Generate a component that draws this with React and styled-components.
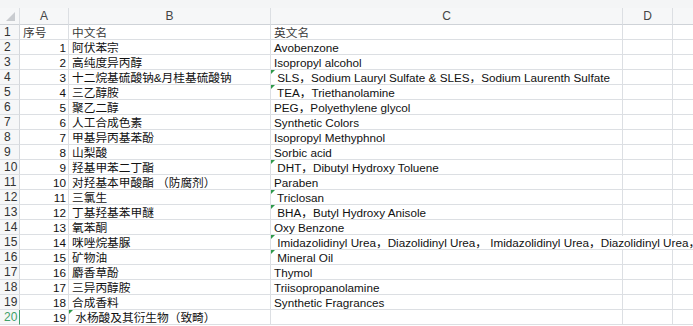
import React from "react";
import styled, { createGlobalStyle } from "styled-components";

const rows = [
  { a: "序号", b: "中文名", c: "英文名", head: true },
  { a: "1", b: "阿伏苯宗", c: "Avobenzone" },
  { a: "2", b: "高纯度异丙醇", c: "Isopropyl alcohol" },
  { a: "3", b: "十二烷基硫酸钠&月桂基硫酸钠", c: " SLS，Sodium Lauryl Sulfate & SLES，Sodium Laurenth Sulfate", cm: true },
  { a: "4", b: "三乙醇胺", c: " TEA，Triethanolamine", cm: true },
  { a: "5", b: "聚乙二醇", c: "PEG，Polyethylene glycol" },
  { a: "6", b: "人工合成色素", c: "Synthetic Colors" },
  { a: "7", b: "甲基异丙基苯酚", c: "Isopropyl Methyphnol" },
  { a: "8", b: "山梨酸", c: "Sorbic acid" },
  { a: "9", b: "羟基甲苯二丁酯", c: " DHT，Dibutyl Hydroxy Toluene", cm: true },
  { a: "10", b: "对羟基本甲酸酯 （防腐剂）", c: "Paraben" },
  { a: "11", b: "三氯生", c: " Triclosan", cm: true },
  { a: "12", b: "丁基羟基苯甲醚", c: " BHA，Butyl Hydroxy Anisole", cm: true },
  { a: "13", b: "氧苯酮", c: "Oxy Benzone" },
  { a: "14", b: "咪唑烷基脲", c: " Imidazolidinyl Urea，Diazolidinyl Urea， Imidazolidinyl Urea，Diazolidinyl Urea，", cm: true, spill: true },
  { a: "15", b: "矿物油", c: " Mineral Oil", cm: true },
  { a: "16", b: "麝香草酚", c: "Thymol" },
  { a: "17", b: "三异丙醇胺", c: "Triisopropanolamine" },
  { a: "18", b: "合成香料", c: "Synthetic Fragrances" },
  { a: "19", b: " 水杨酸及其衍生物（致畸）", c: "", bm: true },
];

const GlobalStyle = createGlobalStyle`
  body {
    margin: 0;
    background: #ffffff;
    font-family: "Liberation Sans", "Noto Sans CJK SC", sans-serif;
  }
`;

const Page = styled.div`
  width: 693px;
  height: 326px;
  overflow: hidden;
  background: #fff;
`;

const TopStrip = styled.div`
  height: 8px;
  background: #f4f5f6;
`;

const Grid = styled.div`
  display: grid;
  grid-template-columns: 20px 49px 202px 352px 50px 40px;
  grid-template-rows: 17px;
  grid-auto-rows: 15px;
`;

const ColHead = styled.div`
  background: #f6f7f8;
  border-right: 1px solid #dcdfe3;
  border-bottom: 1px solid #cfd3d8;
  color: #454545;
  font-size: 12px;
  display: flex;
  align-items: center;
  justify-content: center;
  position: relative;
`;

const Corner = styled(ColHead)`
  &::after {
    content: "";
    position: absolute;
    right: 4px;
    bottom: 3px;
    width: 0;
    height: 0;
    border-left: 9px solid transparent;
    border-bottom: 9px solid #c9ccd0;
  }
`;

const RowHead = styled.div`
  background: #f6f7f8;
  border-right: 1px solid ${(p) => (p.$active ? "#3fa06b" : "#d4d7db")};
  border-bottom: 1px solid #dcdfe3;
  color: ${(p) => (p.$active ? "#3f9f68" : "#333")};
  font-size: 12px;
  line-height: 15px;
  padding-left: 4px;
  box-sizing: border-box;
  overflow: hidden;
`;

const Cell = styled.div`
  border-right: 1px solid #dcdfe3;
  border-bottom: 1px solid #dcdfe3;
  font-size: ${(p) => (p.$cjk ? "11.7px" : "11.7px")};
  line-height: 15px;
  color: ${(p) => (p.$head ? "#3a3a3a" : "#111")};
  text-align: ${(p) => (p.$num ? "right" : "left")};
  padding: 0 2px 0 3px;
  white-space: pre;
  position: relative;
  overflow: ${(p) => (p.$spill ? "visible" : "hidden")};
  z-index: ${(p) => (p.$spill ? 2 : 1)};
  box-sizing: border-box;

  &::before {
    content: "";
    display: ${(p) => (p.$mark ? "block" : "none")};
    position: absolute;
    left: 0;
    top: 0;
    border-top: 4px solid #2e9a4a;
    border-right: 4px solid transparent;
  }
`;

const Spill = styled.span`
  background: #fff;
`;

export default function App() {
  return (
    <Page>
      <GlobalStyle />
      <TopStrip />
      <Grid>
        <Corner />
        <ColHead>A</ColHead>
        <ColHead>B</ColHead>
        <ColHead>C</ColHead>
        <ColHead>D</ColHead>
        <ColHead />
        {rows.map((r, i) => (
          <React.Fragment key={i}>
            <RowHead $active={i === 19}>{i + 1}</RowHead>
            <Cell $num={!r.head} $cjk={r.head} $head={r.head}>
              {r.a}
            </Cell>
            <Cell $cjk $head={r.head} $mark={r.bm}>
              {r.b}
            </Cell>
            <Cell $head={r.head} $cjk={r.head} $mark={r.cm} $spill={r.spill}>
              {r.spill ? <Spill>{r.c}</Spill> : r.c}
            </Cell>
            <Cell />
            <Cell />
          </React.Fragment>
        ))}
      </Grid>
    </Page>
  );
}
